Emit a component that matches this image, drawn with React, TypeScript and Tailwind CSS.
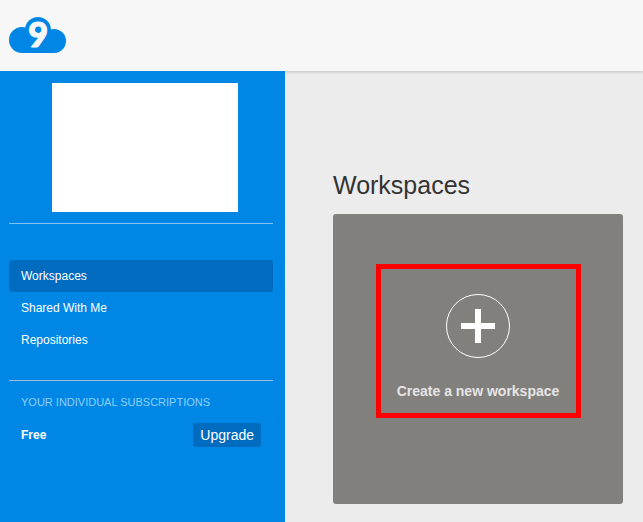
import clsx from 'clsx'

interface NavItem {
	label: string
	href: string
	isActive: boolean
}

const navItems: NavItem[] = [
	{ label: 'Workspaces', href: '#workspaces', isActive: true },
	{ label: 'Shared With Me', href: '#shared', isActive: false },
	{ label: 'Repositories', href: '#repositories', isActive: false }
]

function CloudLogo() {
	return (
		<svg
			width="57"
			height="36"
			viewBox="0 0 57 36"
			role="img"
			aria-label="Cloud9"
			className="overflow-visible"
		>
			<g fill="#0087e6">
				<circle cx="13" cy="23" r="13" />
				<circle cx="45" cy="24" r="12" />
				<circle cx="29" cy="13" r="13" />
				<rect x="13" y="18" width="32" height="18" />
			</g>
			<text
				x="29"
				y="30"
				textAnchor="middle"
				fill="#f7f7f7"
				stroke="#f7f7f7"
				strokeWidth="1.2"
				strokeLinejoin="round"
				className="font-['Lato',sans-serif] text-[34px] font-black"
			>
				9
			</text>
		</svg>
	)
}

function Sidebar() {
	return (
		<aside className="z-10 w-[285px] shrink-0 bg-[#0087e6] px-3 pl-[9px] pt-3 text-xs text-white">
			<div className="border-b border-[#80c3f2] pb-[11px]">
				<div className="ml-[43px] h-[129px] w-[186px] bg-white" />
			</div>
			<nav className="border-b border-[#9fbcd8] pb-6 pt-9">
				{navItems.map((item) => (
					<a
						key={item.label}
						href={item.href}
						className={clsx(
							'block h-8 rounded-[3px] px-3 leading-8',
							item.isActive && 'bg-[#006cbf]'
						)}
					>
						{item.label}
					</a>
				))}
			</nav>
			<section className="px-3 pt-[11px]">
				<h2 className="text-[11px] leading-5 text-[#8fd0fa]">YOUR INDIVIDUAL SUBSCRIPTIONS</h2>
				<div className="mt-[11px] flex items-center justify-between">
					<span className="font-bold">Free</span>
					<button type="button" className="h-6 rounded-[3px] bg-[#006cbf] px-[7px] text-sm">
						Upgrade
					</button>
				</div>
			</section>
		</aside>
	)
}

function CreateWorkspaceCard() {
	return (
		<button
			type="button"
			className="flex h-[290px] w-full flex-col items-center rounded-[3px] bg-[#82807d] pt-[50px]"
		>
			<span className="flex h-[154px] w-[205px] flex-col items-center border-5 border-[#ff0000] pt-[25px]">
				<svg width="64" height="64" viewBox="0 0 64 64" fill="none" stroke="#fff">
					<circle cx="32" cy="32" r="31.5" />
					<path d="M15 32h34M32 15v34" strokeWidth="6" />
				</svg>
				<span className="mt-[23px] text-sm font-bold text-[#e6e5e5]">Create a new workspace</span>
			</span>
		</button>
	)
}

export default function App() {
	return (
		<div className="flex min-h-screen flex-col bg-[#ececec] font-['Liberation_Sans',Arial,sans-serif]">
			<header className="h-[71px] bg-[#f7f7f7] pl-[9px] pt-[17px] shadow-[0_1px_3px_rgba(0,0,0,0.2)]">
				<CloudLogo />
			</header>
			<div className="flex grow">
				<Sidebar />
				<main className="grow pl-12 pr-5 pt-[98px]">
					<h1 className="mb-[13px] text-[25px] leading-8 text-[#333]">Workspaces</h1>
					<CreateWorkspaceCard />
				</main>
			</div>
		</div>
	)
}
